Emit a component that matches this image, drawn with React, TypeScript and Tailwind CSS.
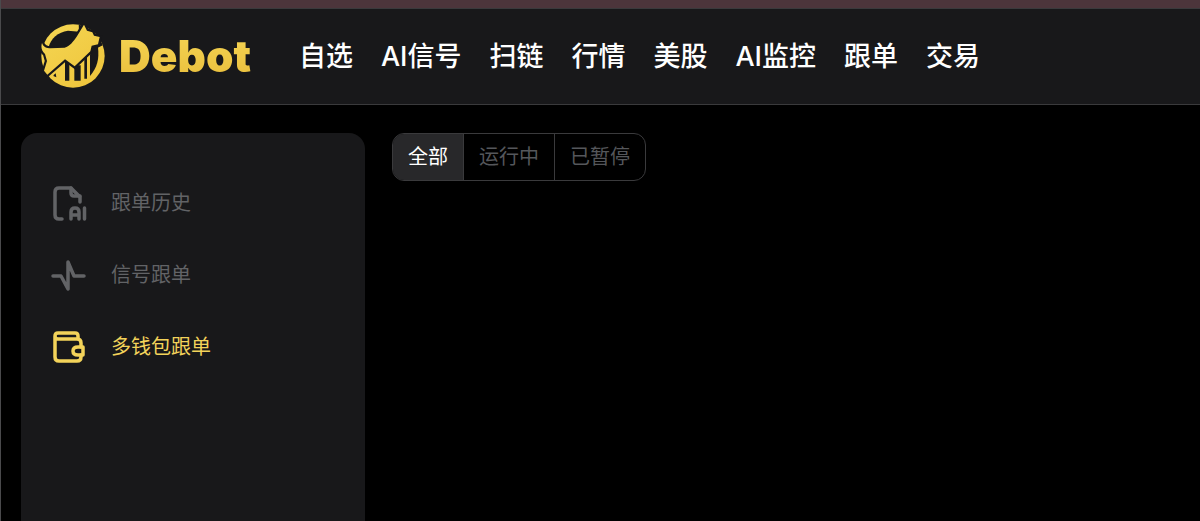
const navItems = ["自选", "AI信号", "扫链", "行情", "美股", "AI监控", "跟单", "交易"];

const menuItems = [
  { label: "跟单历史", Icon: FileAiIcon, active: false },
  { label: "信号跟单", Icon: PulseIcon, active: false },
  { label: "多钱包跟单", Icon: WalletIcon, active: true },
];

const filters = ["全部", "运行中", "已暂停"];

function LogoMark() {
  return (
    <svg viewBox="35 26 192 192" className="size-16 shrink-0" aria-hidden="true">
      <defs>
        <linearGradient id="gold" gradientUnits="userSpaceOnUse" x1="60" y1="30" x2="200" y2="210">
          <stop offset="0" stopColor="#f4d551" />
          <stop offset="1" stopColor="#efc53c" />
        </linearGradient>
        <clipPath id="disc">
          <circle cx="131" cy="122" r="95" />
        </clipPath>
      </defs>
      <g clipPath="url(#disc)">
        <rect x="35" y="26" width="192" height="192" fill="url(#gold)" />
        {/* sky behind the dog */}
        <path d="M58 95C64 70 86 50 116 46L150 49L130 90L66 102Z" fill="#18181a" />
        <path d="M148 20L168 20L240 20V80L208 96L180 120L150 90Z" fill="#18181a" />
        {/* gap inside the right side of the ring */}
        <path d="M184 108L206 96C210 132 204 156 182 182V120Z" fill="#18181a" />
        {/* bars */}
        <path d="M107 140H120V196H107ZM135 150H154V196H135Z" fill="#18181a" />
        <path d="M165 124H173V190H165Z" fill="#18181a" />
        <path d="M74 178L79 174L81 186L72 182Z" fill="#18181a" />
      </g>
      <path
        d="M38 83C43 96 51 99 64 99L106 97C122 92 132 78 142 64L164 28L173 46L189 51L194 61L211 65L206 87L187 91L183 108L136 153L107 132L54 178L44 166L53 137L47 116C37 107 34 96 38 83Z"
        fill="url(#gold)"
        stroke="#18181a"
        strokeWidth="13"
        paintOrder="stroke"
      />
    </svg>
  );
}

function FileAiIcon() {
  return (
    <svg viewBox="0 0 36 36" className="size-9" fill="none" stroke="currentColor" strokeWidth="3.5" strokeLinecap="round" strokeLinejoin="round" aria-hidden="true">
      <path d="M11 34H8Q4 34 4 30V7Q4 3 8 3H20L29 12V17" />
      <path d="M20 3V8Q20 11 23 11H29" />
      <path d="M20 34V27Q20 23 24 23Q28 23 28 27V34M20 30H28M33.500 23V34" />
    </svg>
  );
}

function PulseIcon() {
  return (
    <svg viewBox="0 0 36 36" className="size-9" fill="none" stroke="currentColor" strokeWidth="3.5" strokeLinecap="round" strokeLinejoin="round" aria-hidden="true">
      <path d="M2 19H10L17 32V5L23 19H33" />
    </svg>
  );
}

function WalletIcon() {
  return (
    <svg viewBox="0 0 36 36" className="size-9" fill="none" stroke="currentColor" strokeWidth="3.5" strokeLinecap="round" strokeLinejoin="round" aria-hidden="true">
      <path d="M27 10V7Q27 4 24 4H7Q4 4 4 7V28Q4 32 8 32H26Q30 32 30 28V26M30 18V14Q30 10 26 10H7Q4 10 4 7" />
      <path d="M32 18H27Q22 18 22 22Q22 26 27 26H32Z" />
    </svg>
  );
}

export default function App() {
  return (
    <div className="flex min-h-screen flex-col border-l border-[#4a4a4c] bg-black font-['Inter','Noto_Sans_CJK_SC',sans-serif]">
      <div className="h-2 bg-[#4c353b]" />

      <header className="flex h-[97px] items-center gap-12 border-y border-[#3a3a3c] bg-[#18181a] pb-0.5 pl-10">
        <a href="#" className="flex items-center gap-3.5">
          <LogoMark />
          <span className="bg-linear-to-b from-[#f5d655] to-[#e9bd3a] bg-clip-text text-[44px] leading-14 font-black text-transparent">
            Debot
          </span>
        </a>
        <nav className="flex items-center gap-7 pt-0.5 text-[27px] leading-10 font-medium whitespace-nowrap text-white">
          {navItems.map((item) => (
            <a key={item} href="#">
              {item}
            </a>
          ))}
        </nav>
      </header>

      <div className="flex grow gap-[27px] pt-7 pl-5">
        <aside className="w-86 shrink-0 rounded-t-2xl bg-[#18181a] px-7.5 pt-[50px]">
          <nav className="flex flex-col gap-8">
            {menuItems.map(({ label, Icon, active }) => (
              <a
                key={label}
                href="#"
                className={`flex items-center gap-6 text-xl leading-10 ${active ? "text-[#f3d35a]" : "text-[#626366]"}`}
              >
                <Icon />
                {label}
              </a>
            ))}
          </nav>
        </aside>

        <main className="min-w-0 grow">
          <div className="inline-flex divide-x divide-[#3a3a3c] overflow-hidden rounded-xl border border-[#3a3a3c]">
            {filters.map((label, i) => (
              <button
                key={label}
                type="button"
                className={`h-11.5 px-[15px] text-xl ${i === 0 ? "bg-[#28282a] text-white" : "text-[#55575b]"}`}
              >
                {label}
              </button>
            ))}
          </div>
        </main>
      </div>
    </div>
  );
}
